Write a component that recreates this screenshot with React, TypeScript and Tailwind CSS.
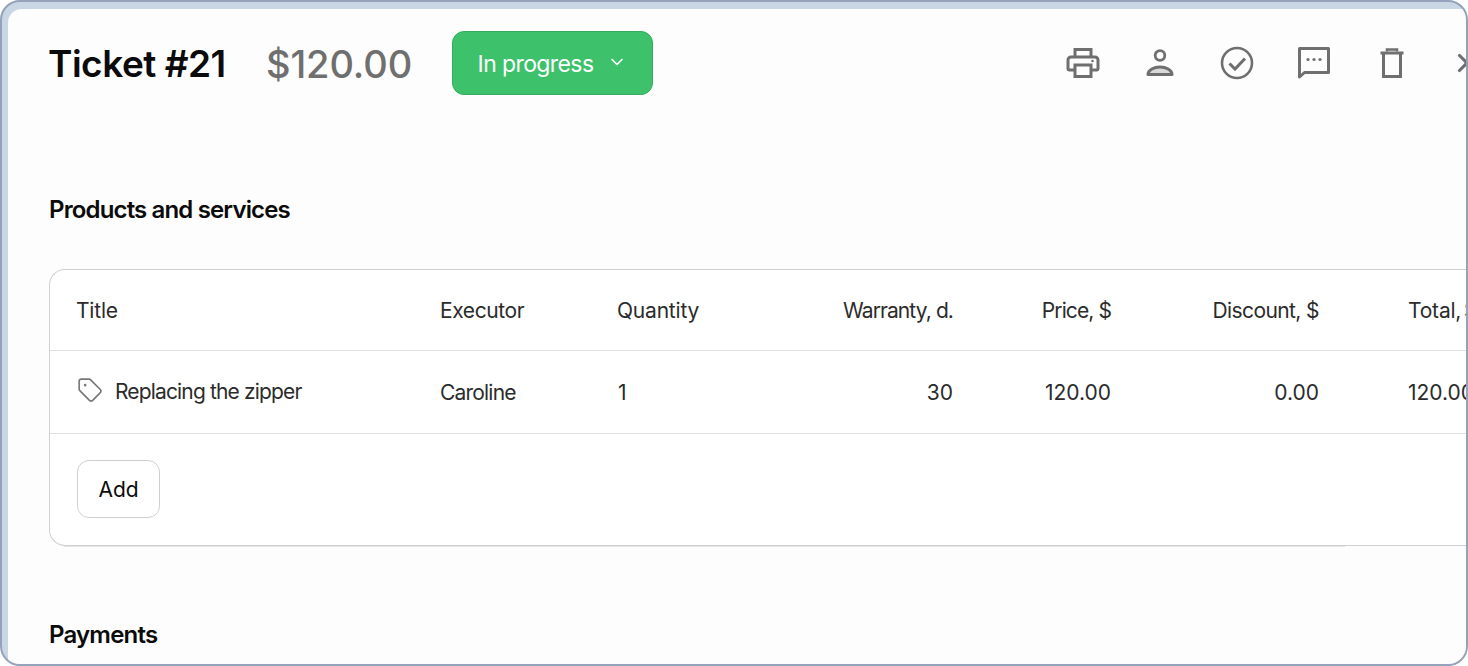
import { ChevronDown, Tag, X } from "lucide-react"

function PrintIcon() {
  return (
    <svg width="34" height="32" viewBox="0 0 34 32" fill="none" stroke="#6f6f6f" strokeWidth="3">
      <path d="M9 10V2.500h16V10" />
      <path d="M9 23H3.500a1.500 1.500 0 0 1-1.500-1.500V13a3 3 0 0 1 3-3h24a3 3 0 0 1 3 3v8.500a1.500 1.500 0 0 1-1.500 1.500H25" />
      <path d="M9 18h16v11.500H9z" />
      <circle cx="26.500" cy="14" r="1.300" fill="#6f6f6f" stroke="none" />
    </svg>
  )
}

function PersonIcon() {
  return (
    <svg width="28" height="28" viewBox="0 0 28 28" fill="none" stroke="#6f6f6f">
      <circle cx="14" cy="6.500" r="4.800" strokeWidth="2.800" />
      <path d="M2 25.500c0-4.500 6-7.500 12-7.500s12 3 12 7.500z" fill="#6f6f6f" fillOpacity="0.25" strokeWidth="3" strokeLinejoin="round" />
    </svg>
  )
}

function CheckIcon() {
  return (
    <svg width="34" height="34" viewBox="0 0 34 34" fill="none" stroke="#6f6f6f" strokeWidth="2.600">
      <circle cx="17" cy="17" r="15" />
      <path d="M9.500 17.500l5.500 5.500 10-10.500" strokeWidth="3" />
    </svg>
  )
}

function ChatIcon() {
  return (
    <svg width="34" height="34" viewBox="0 0 34 34" fill="none">
      <path d="M2.500 2.500h29v24h-24l-5 4.500z" stroke="#6f6f6f" strokeWidth="3" strokeLinejoin="round" />
      <circle cx="11" cy="13.500" r="1.600" fill="#6f6f6f" />
      <circle cx="17" cy="13.500" r="1.600" fill="#6f6f6f" />
      <circle cx="23" cy="13.500" r="1.600" fill="#6f6f6f" />
    </svg>
  )
}

function TrashIcon() {
  return (
    <svg width="24" height="30" viewBox="0 0 24 30" fill="none" stroke="#6f6f6f" strokeWidth="3">
      <path d="M0.500 5h23" />
      <path d="M7 3.500V1.500h10v2" strokeWidth="2.500" />
      <path d="M3.500 5v23.500h17V5" />
    </svg>
  )
}

const cols = [
  { label: "Executor", value: "Caroline", cls: "w-[177px] text-left", lt: "tracking-[-0.4px]", vt: "tracking-[-0.8px]" },
  { label: "Quantity", value: "1", cls: "w-[177px] text-left", lt: "tracking-[-0.2px]", vt: "pl-[1px]" },
  { label: "Warranty, d.", value: "30", cls: "w-[159px] text-right", lt: "tracking-[-0.9px]", vt: "tracking-[0px]" },
  { label: "Price, $", value: "120.00", cls: "w-[158px] text-right", lt: "tracking-[-0.9px]", vt: "tracking-[0px]" },
  { label: "Discount, $", value: "0.00", cls: "w-[208px] text-right", lt: "tracking-[-0.6px]", vt: "tracking-[0px]" },
]

export default function App() {
  return (
    <div
      className="w-[1468px] h-[666px] overflow-hidden bg-white"
      style={{ fontFamily: "Inter, 'Liberation Sans', sans-serif" }}
    >
      <div className="h-full rounded-[20px] border-2 border-[#94a3bb] bg-[#c9d6e4] pt-[7px] pl-[6px] overflow-hidden">
        <div className="h-full rounded-tl-[14px] bg-[#fdfdfd] overflow-hidden">
          {/* Header */}
          <div className="flex items-center pl-[40px] pt-[24px] h-[86px] relative">
            <h1 className="text-[37px] leading-[44px] font-semibold tracking-[-0.5px] text-[#0b0b0b] w-[218px] whitespace-nowrap">
              Ticket #21
            </h1>
            <span className="text-[38px] leading-[44px] font-medium tracking-[-0.1px] text-[#6f6f6f] w-[186px] whitespace-nowrap">
              $120.00
            </span>
            <button className="w-[201px] h-[64px] -mt-[3px] pt-[4px] rounded-[12px] bg-[#3dc16a] border border-[#35ad5e] flex items-center justify-center gap-[14px] text-white text-[23px] tracking-[-0.6px]">
              In progress
              <ChevronDown className="w-[20px] h-[20px] -mt-[5px]" strokeWidth={2} />
            </button>
            <div className="absolute left-[1058px] top-[37px] flex items-center whitespace-nowrap">
              <div className="w-[77px] flex justify-start"><PrintIcon /></div>
              <div className="w-[77px] flex justify-start pl-[3px]"><PersonIcon /></div>
              <div className="w-[77px] flex justify-start"><CheckIcon /></div>
              <div className="w-[83px] flex justify-start"><ChatIcon /></div>
              <div className="w-[72px] flex justify-start"><TrashIcon /></div>
              <X className="w-[30px] h-[30px] text-[#6f6f6f]" strokeWidth={2.500} />
            </div>
          </div>

          {/* Products */}
          <h2 className="mt-[99px] pl-[41px] text-[24px] leading-[32px] font-semibold tracking-[-0.85px] text-[#0b0b0b]">
            Products and services
          </h2>
          <div className="mt-[43px] ml-[41px] w-[1500px] h-[277px] rounded-l-[16px] border border-[#cfcfcf] border-r-0 bg-white text-[#2b2b2b] text-[21px]">
            <div className="flex items-center h-[81px] pl-[26px] pt-[2px] border-b border-[#e0e0e0]">
              <div className="w-[364px] tracking-[-0.2px]">Title</div>
              {cols.map((c) => (
                <div key={c.label} className={`${c.cls} ${c.lt}`}>{c.label}</div>
              ))}
              <div className="ml-[89px] whitespace-nowrap tracking-[-0.2px] [word-spacing:-3px]">Total, $</div>
            </div>
            <div className="flex items-center h-[83px] pl-[27px] pt-[2px] border-b border-[#e0e0e0]">
              <div className="w-[363px] flex items-center gap-[12px]">
                <Tag className="w-[26px] h-[26px] text-[#777777] -mt-[6px]" strokeWidth={1.500} />
                <span className="-mt-[2px] tracking-[-0.85px]">Replacing the zipper</span>
              </div>
              {cols.map((c) => (
                <div key={c.label} className={`${c.cls} ${c.vt}`}>{c.value}</div>
              ))}
              <div className="ml-[89px]">120.00</div>
            </div>
            <div className="pl-[26px] pt-[26px]">
              <button className="w-[83px] h-[58px] ml-px pt-[2px] rounded-[12px] border border-[#cfcfcf] bg-white text-[#0b0b0b] font-normal">
                Add
              </button>
            </div>
          </div>
          <div className="ml-[56px] w-[1281px] h-px bg-[#e4e4e4]" />

          {/* Payments */}
          <h2 className="mt-[72px] pl-[41px] text-[24px] leading-[32px] font-semibold tracking-[-0.8px] text-[#0b0b0b]">
            Payments
          </h2>
        </div>
      </div>
    </div>
  )
}
